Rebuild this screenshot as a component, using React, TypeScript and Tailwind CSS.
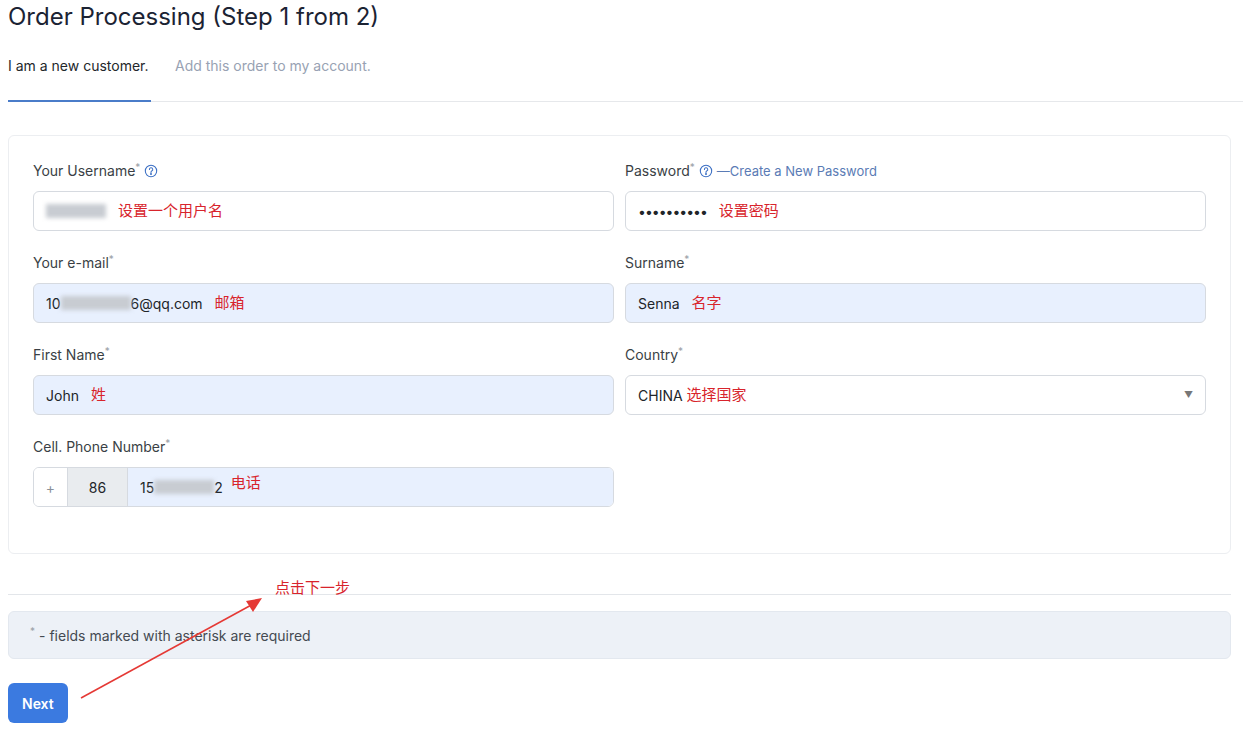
import React from "react";

const Help = () => (
  <svg width="14" height="14" viewBox="0 0 16 16" fill="none" stroke="#3b6fc4" strokeWidth="1.2" className="inline-block">
    <circle cx="8" cy="8" r="6.5" />
    <path d="M6.2 6.3a1.9 1.9 0 1 1 2.6 1.7c-.5.3-.8.6-.8 1.2v.4" strokeLinecap="round" />
    <circle cx="8" cy="11.4" r="0.5" fill="#3b6fc4" />
  </svg>
);

const Label = ({ children }: { children: React.ReactNode }) => (
  <div className="h-[20px] leading-[20px] flex items-center gap-1 text-[14px] text-[#3a3f45] mb-[10px]">{children}</div>
);

const Star = () => <span className="relative -top-[4px] text-[#9aa0a6] text-[10px] leading-none -ml-1">*</span>;

const Note = ({ children }: { children: React.ReactNode }) => (
  <span className="text-[#d8242c] text-[15px] ml-3">{children}</span>
);

const Blur = ({ w }: { w: number }) => (
  <span className="inline-block h-[14px] bg-[#c8ccd2] blur-[2px] align-middle" style={{ width: w }} />
);

export default function App() {
  return (
    <div className="relative min-h-[744px] bg-white pl-2 pr-3 text-[#212529]" style={{ fontFamily: "Inter, 'Noto Sans CJK SC', sans-serif" }}>
      <h1 className="text-[24px] leading-[34px] font-normal text-[#1b2333]">Order Processing (Step 1 from 2)</h1>
      <div className="mt-[22px] flex border-b border-[#e6e8eb] text-[14px] leading-[20px] -mr-3">
        <div className="pb-[24px] border-b-2 border-[#4a7cc9] -mb-px w-[143px] text-[#23272b]">I am a new customer.</div>
        <div className="pl-[24px] text-[#98a2b3]">Add this order to my account.</div>
      </div>

      <div className="mt-[33px] border border-[#eceef1] rounded-md px-[24px] pt-[25px] pb-[46px]">
        <div className="grid grid-cols-2 gap-x-[11px] gap-y-[22px]">
          <div>
            <Label>Your Username<Star /> <Help /></Label>
            <div className="h-[40px] border border-[#d6dae0] rounded-md flex items-center px-3 text-[14px]">
              <Blur w={60} /><Note>设置一个用户名</Note>
            </div>
          </div>
          <div>
            <Label>Password<Star /> <Help /><span className="text-[#5a7bb5] text-[13px]">—Create a New Password</span></Label>
            <div className="h-[40px] border border-[#d6dae0] rounded-md flex items-center px-3 text-[14px]">
              <span className="tracking-[-1px]">••••••••••</span><Note>设置密码</Note>
            </div>
          </div>
          <div>
            <Label>Your e-mail<Star /></Label>
            <div className="h-[40px] border border-[#d6dae0] bg-[#e8f0fe] rounded-md flex items-center px-3 text-[14px]">
              10<Blur w={70} />6@qq.com<Note>邮箱</Note>
            </div>
          </div>
          <div>
            <Label>Surname<Star /></Label>
            <div className="h-[40px] border border-[#d6dae0] bg-[#e8f0fe] rounded-md flex items-center px-3 text-[14px]">
              Senna<Note>名字</Note>
            </div>
          </div>
          <div>
            <Label>First Name<Star /></Label>
            <div className="h-[40px] border border-[#d6dae0] bg-[#e8f0fe] rounded-md flex items-center px-3 text-[14px]">
              John<Note>姓</Note>
            </div>
          </div>
          <div>
            <Label>Country<Star /></Label>
            <div className="h-[40px] border border-[#d6dae0] rounded-md flex items-center px-3 text-[14px]">
              CHINA<span className="text-[#d8242c] text-[15px] ml-1">选择国家</span>
              <span className="ml-auto text-[#777] text-[9px]">▼</span>
            </div>
          </div>
          <div>
            <Label>Cell. Phone Number<Star /></Label>
            <div className="h-[40px] border border-[#d6dae0] rounded-md flex text-[14px] overflow-hidden">
              <div className="w-[33px] flex items-center justify-center text-[#8a9099] bg-white">+</div>
              <div className="w-[60px] flex items-center justify-center bg-[#e9ecef] border-l border-[#d6dae0]">86</div>
              <div className="flex-1 flex items-center px-3 bg-[#e8f0fe] border-l border-[#d6dae0]">
                15<Blur w={60} />2<span className="text-[#d8242c] text-[15px] ml-2 -mt-2">电话</span>
              </div>
            </div>
          </div>
        </div>
      </div>

      <div className="mt-[40px] border-t border-[#e3e6ea]" />
      <div className="mt-[16px] h-[48px] bg-[#edf1f7] border border-[#e3e8ef] rounded-md flex items-center px-[21px] text-[14px] text-[#444a52]">
        <span className="relative -top-[4px] text-[#9aa0a6] text-[10px] mr-1">*</span>- fields marked with asterisk are required
      </div>
      <button className="mt-[24px] h-[40px] px-[14px] bg-[#3b7ae0] text-white text-[14px] font-semibold rounded-md">Next</button>

      <div className="absolute left-[275px] top-[577px] text-[#d8242c] text-[15px]">点击下一步</div>
      <svg className="absolute left-0 top-0 pointer-events-none" width="1243" height="744">
        <line x1="81" y1="698" x2="255" y2="603" stroke="#e53935" strokeWidth="1.5" />
        <polygon points="262,598 246,601 253,612" fill="#e53935" />
      </svg>
    </div>
  );
}
